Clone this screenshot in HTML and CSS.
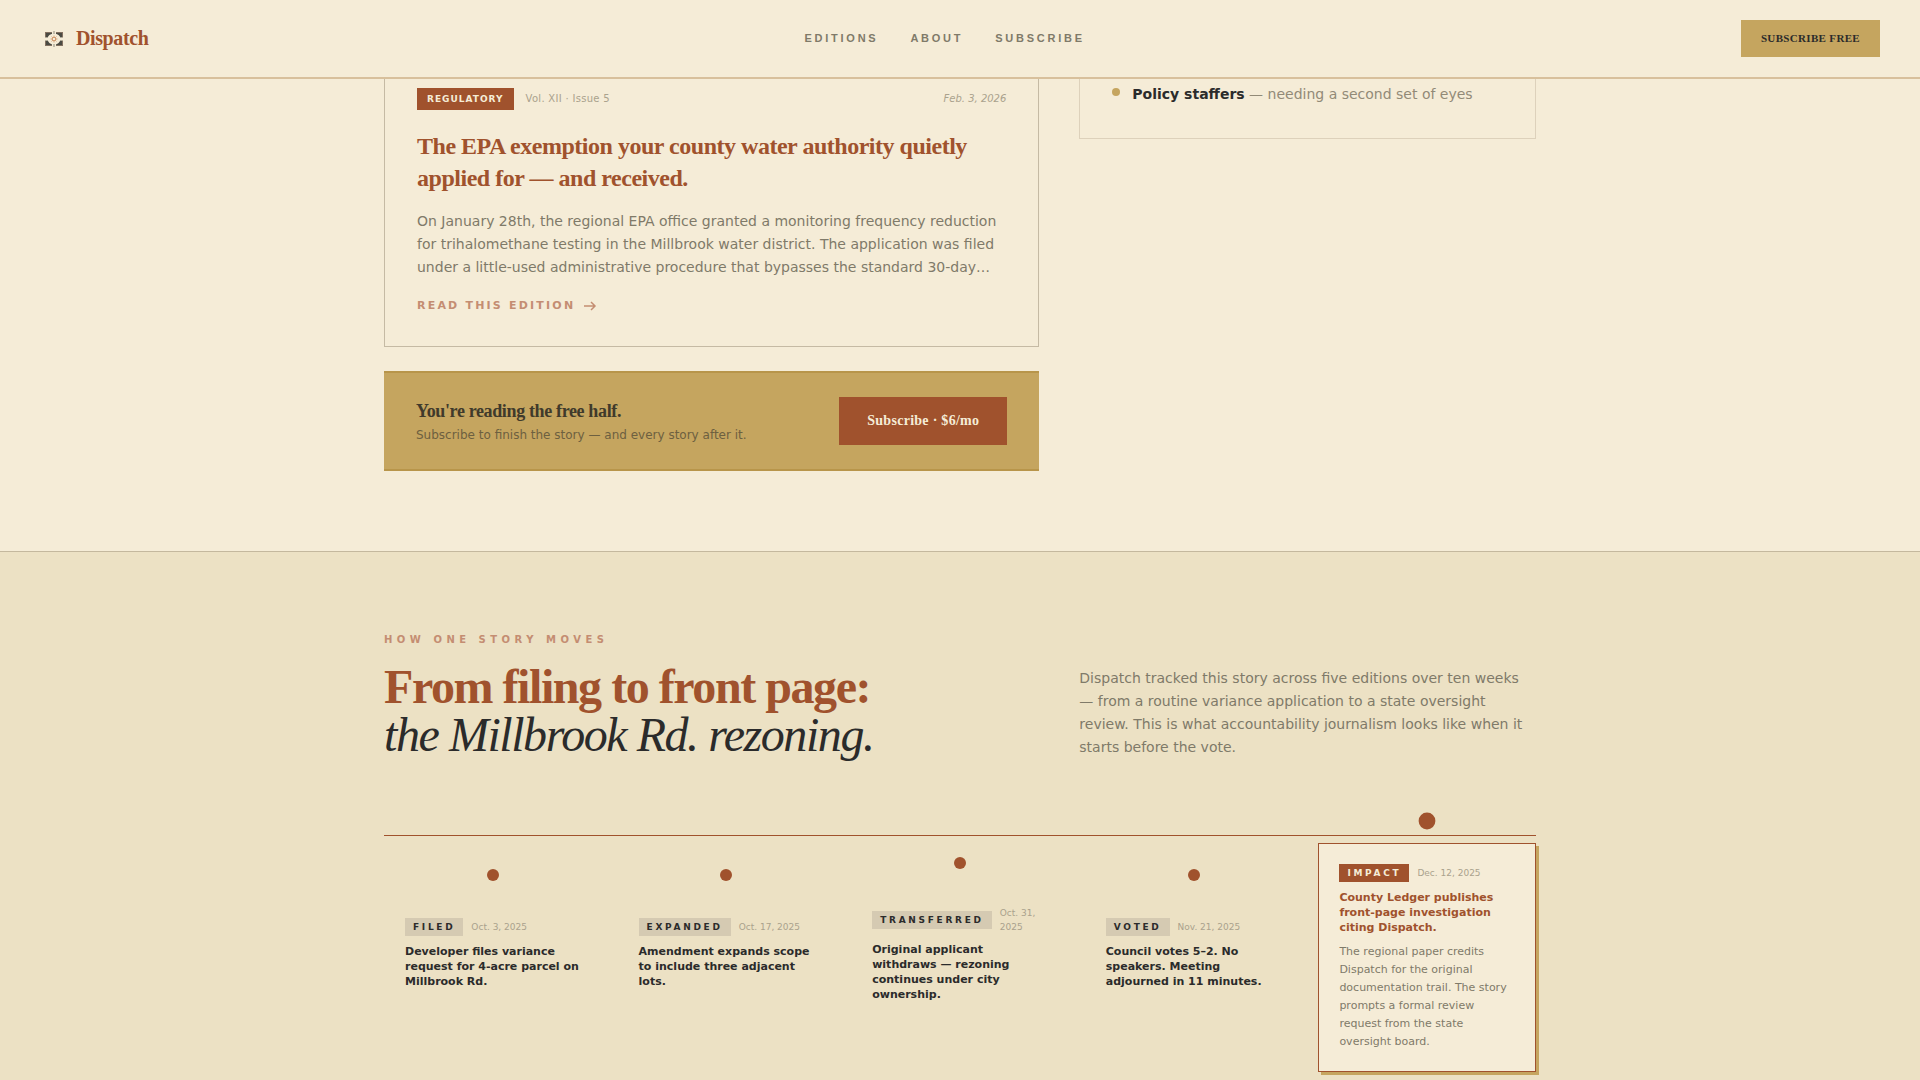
FILE: index.html
```html
<!DOCTYPE html>
<html lang="en">
<head>
<meta charset="utf-8">
<meta name="viewport" content="width=device-width, initial-scale=1">
<title>Dispatch</title>
<link rel="stylesheet" href="styles.css">
</head>
<body>
<header class="site-header">
  <a class="brand" href="#">
    <svg class="brand-mark" viewBox="0 0 28 28" aria-hidden="true">
      <rect x="5" y="7" width="18" height="14" fill="#4a4a42"/>
      <rect x="5.5" y="7.5" width="17" height="13" fill="none" stroke="#a98a74" stroke-opacity=".6"/>
      <ellipse cx="14" cy="14" rx="6.5" ry="5.5" fill="#f5ecd7"/>
      <path d="M12 6.5h4V9h-4zM12 19h4v2.500h-4zM4.500 12.500H8v3H4.500zM20 12.500h3.500v3H20z" fill="#f5ecd7"/>
      <path d="M14 6v3M14 19v3" stroke="#8d8a7b"/>
      <path d="M5 12.500h2M5 15.500h2M21 12.500h2M21 15.500h2" stroke="#b9b19c" stroke-width=".7"/>
      <path d="M14 10.500v7M10.500 14h7M11.500 11.500l5 5M16.500 11.500l-5 5" stroke="#d8a77c" stroke-width=".9"/>
      <circle cx="14" cy="14" r="1.800" fill="#f5ecd7" stroke="#c98a5c" stroke-width=".9"/>
    </svg>
    <span>Dispatch</span>
  </a>
  <nav class="site-nav" aria-label="Main">
    <a href="#editions">Editions</a>
    <a href="#about">About</a>
    <a href="#subscribe">Subscribe</a>
  </nav>
  <button class="header-cta" type="button">Subscribe Free</button>
</header>

<main>
  <section class="editions" id="editions">
    <div class="container columns">
      <div class="feed">
        <article class="edition">
          <div class="edition-meta">
            <span class="badge">Regulatory</span>
            <span class="issue">Vol. XII · Issue 5</span>
            <time class="edition-date" datetime="2026-02-03">Feb. 3, 2026</time>
          </div>
          <h3 class="edition-title">The EPA exemption your county water authority quietly applied for — and received.</h3>
          <p class="edition-text">On January 28th, the regional EPA office granted a monitoring frequency reduction for trihalomethane testing in the Millbrook water district. The application was filed under a little-used administrative procedure that bypasses the standard 30-day…</p>
          <a class="read-link" href="#edition-5">Read this edition
            <svg viewBox="0 0 14 14" aria-hidden="true"><path d="M1 7h11M8 3l4 4-4 4" fill="none" stroke="currentColor" stroke-width="1.5"/></svg>
          </a>
        </article>
        <div class="promo" id="subscribe">
          <div>
            <p class="promo-title">You're reading the free half.</p>
            <p class="promo-text">Subscribe to finish the story — and every story after it.</p>
          </div>
          <button class="promo-cta" type="button">Subscribe · $6/mo</button>
        </div>
      </div>
      <aside class="audience" id="about">
        <ul>
          <li><span><strong>Policy staffers</strong> — needing a second set of eyes</span></li>
        </ul>
      </aside>
    </div>
  </section>

  <section class="story">
    <div class="container">
      <div class="columns story-head">
        <div class="story-heading">
          <p class="eyebrow">How one story moves</p>
          <h2>From filing to front page: <em>the Millbrook Rd. rezoning.</em></h2>
        </div>
        <p class="story-intro">Dispatch tracked this story across five editions over ten weeks — from a routine variance application to a state oversight review. This is what accountability journalism looks like when it starts before the vote.</p>
      </div>
      <ol class="timeline">
        <li class="step">
          <span class="dot"></span>
          <div class="step-card">
            <div class="step-meta"><span class="tag">Filed</span><time datetime="2025-10-03">Oct. 3, 2025</time></div>
            <h3>Developer files variance request for 4-acre parcel on Millbrook Rd.</h3>
          </div>
        </li>
        <li class="step">
          <span class="dot"></span>
          <div class="step-card">
            <div class="step-meta"><span class="tag">Expanded</span><time datetime="2025-10-17">Oct. 17, 2025</time></div>
            <h3>Amendment expands scope to include three adjacent lots.</h3>
          </div>
        </li>
        <li class="step">
          <span class="dot"></span>
          <div class="step-card">
            <div class="step-meta"><span class="tag">Transferred</span><time datetime="2025-10-31">Oct. 31, 2025</time></div>
            <h3>Original applicant withdraws — rezoning continues under city ownership.</h3>
          </div>
        </li>
        <li class="step">
          <span class="dot"></span>
          <div class="step-card">
            <div class="step-meta"><span class="tag">Voted</span><time datetime="2025-11-21">Nov. 21, 2025</time></div>
            <h3>Council votes 5–2. No speakers. Meeting adjourned in 11 minutes.</h3>
          </div>
        </li>
        <li class="step step-active">
          <span class="dot"></span>
          <div class="step-card">
            <div class="step-meta"><span class="tag">Impact</span><time datetime="2025-12-12">Dec. 12, 2025</time></div>
            <h3>County Ledger publishes front-page investigation citing Dispatch.</h3>
            <p>The regional paper credits Dispatch for the original documentation trail. The story prompts a formal review request from the state oversight board.</p>
          </div>
        </li>
      </ol>
    </div>
  </section>
</main>
</body>
</html>
```
FILE: styles.css
```css
:root {
  --cream: #f5ecd7;
  --sand: #ece1c4;
  --sienna: #a0522d;
  --gold: #c5a55f;
  --ink: #2b2b2b;
  --muted: #7f7a69;
  --faint: #aaa28d;
  --serif: "Liberation Serif", "Times New Roman", serif;
  --sans: "DejaVu Sans", Verdana, sans-serif;
}

* { box-sizing: border-box; margin: 0; padding: 0; }

body {
  background: var(--cream);
  color: var(--ink);
  font-family: var(--sans);
  font-size: 14px;
  line-height: 23px;
}

a { color: inherit; text-decoration: none; }
ul, ol { list-style: none; }
button { border: 0; cursor: pointer; font-family: var(--serif); font-weight: 700; }

/* Header */
.site-header {
  position: sticky;
  top: 0;
  z-index: 10;
  display: flex;
  align-items: center;
  justify-content: space-between;
  padding: 20px 40px;
  background: var(--cream);
  border-bottom: 2px solid #d8c09c;
}
.brand {
  display: flex;
  align-items: center;
  gap: 8px;
  color: var(--sienna);
  font: 700 20px/29px var(--serif);
  letter-spacing: -0.02em;
}
.brand-mark { width: 28px; height: 28px; }
.site-nav {
  display: flex;
  gap: 32px;
  color: var(--muted);
  font: 700 11px/17px "Liberation Sans", Arial, sans-serif;
  letter-spacing: 0.25em;
  text-transform: uppercase;
}
.header-cta {
  padding: 10px 20px;
  background: var(--gold);
  color: var(--ink);
  font-size: 11px;
  line-height: 17px;
  letter-spacing: 0.03em;
  text-transform: uppercase;
}

/* Layout */
.container { max-width: 1152px; margin: 0 auto; }
.columns {
  display: grid;
  grid-template-columns: repeat(12, 1fr);
  column-gap: 40px;
}

/* Editions */
.editions { padding-bottom: 80px; }
.feed {
  grid-column: span 7;
  display: flex;
  flex-direction: column;
  gap: 24px;
}
.edition {
  padding: 9px 32px 32px;
  border: 1px solid #c5baa4;
  border-top: 0;
}
.edition-meta {
  display: flex;
  align-items: center;
  gap: 12px;
  margin-bottom: 20px;
  font-size: 10px;
  line-height: 14px;
  color: var(--faint);
}
.badge {
  padding: 4px 10px;
  background: var(--sienna);
  color: var(--cream);
  font-size: 9px;
  font-weight: 700;
  letter-spacing: 1px;
  text-transform: uppercase;
}
.issue { letter-spacing: 0.03em; }
.edition-date { margin-left: auto; font-style: italic; }
.edition-title {
  margin-bottom: 16px;
  color: var(--sienna);
  font: 700 24px/32px var(--serif);
  letter-spacing: -0.02em;
}
.edition-text { margin-bottom: 18px; color: var(--muted); }
.read-link {
  display: flex;
  align-items: center;
  gap: 8px;
  color: #c48d72;
  font-size: 11px;
  font-weight: 700;
  line-height: 17px;
  letter-spacing: 0.2em;
  text-transform: uppercase;
}
.read-link svg { width: 14px; height: 14px; }

.promo {
  display: flex;
  align-items: center;
  justify-content: space-between;
  padding: 24px 32px;
  background: var(--gold);
  border-top: 2px solid #b8954a;
  border-bottom: 2px solid #b8954a;
}
.promo-title {
  color: #403a2b;
  font: 700 18px/28px var(--serif);
  letter-spacing: -0.02em;
}
.promo-text { color: #6d6040; font-size: 12px; line-height: 20px; }
.promo-cta {
  padding: 14px 28px;
  background: var(--sienna);
  color: var(--cream);
  font-size: 14px;
  line-height: 20px;
  letter-spacing: 0.02em;
}

.audience {
  grid-column: span 5;
  align-self: start;
  padding: 4px 32px 32px;
  border: 1px solid #ddd1bb;
  border-top: 0;
  color: #928a77;
}
.audience li { display: flex; gap: 12px; }
.audience li::before {
  content: "";
  flex: none;
  width: 8px;
  height: 8px;
  margin-top: 5px;
  border-radius: 50%;
  background: var(--gold);
}
.audience strong { color: var(--ink); }

/* Story timeline */
.story {
  padding: 80px 0;
  background: var(--sand);
  border-top: 1px solid #c4b89e;
}
.story-head { align-items: end; margin-bottom: 56px; }
.story-heading { grid-column: span 7; }
.eyebrow {
  margin-bottom: 16px;
  color: #c48d72;
  font-size: 10px;
  font-weight: 700;
  line-height: 15px;
  letter-spacing: 0.45em;
  text-transform: uppercase;
}
.story-heading h2 {
  color: var(--sienna);
  font: 700 48px/48px var(--serif);
  letter-spacing: -0.03em;
}
.story-heading em {
  display: block;
  color: var(--ink);
  font-weight: 400;
}
.story-intro { grid-column: span 5; color: var(--muted); }

.timeline {
  position: relative;
  display: grid;
  grid-template-columns: repeat(5, 1fr);
  align-items: center;
  gap: 16px;
}
.timeline::before {
  content: "";
  position: absolute;
  top: 20px;
  left: 0;
  right: 0;
  height: 1px;
  background: var(--sienna);
}
.step {
  display: flex;
  flex-direction: column;
  align-items: center;
  gap: 16px;
  margin-bottom: 8px;
}
.dot {
  width: 12px;
  height: 12px;
  border-radius: 50%;
  background: var(--sienna);
}
.step-card {
  width: 100%;
  padding: 20px;
  border: 1px solid transparent;
  font-size: 11px;
  line-height: 18px;
}
.step-meta {
  display: flex;
  align-items: center;
  gap: 8px;
  margin-bottom: 8px;
  color: var(--faint);
  font-size: 9px;
  line-height: 14px;
}
.tag {
  padding: 2px 8px;
  background: #d5cab2;
  color: var(--ink);
  font-weight: 700;
  letter-spacing: 0.3em;
  text-transform: uppercase;
}
.step-card h3 { font-size: 11px; line-height: 15px; }
.step-card p { margin-top: 8px; color: var(--muted); }

.step-active { margin-bottom: 0; }
.step-active .dot { transform: scale(1.4); }
.step-active .step-card {
  background: var(--cream);
  border-color: var(--sienna);
  box-shadow: 3px 3px 0 var(--gold);
}
.step-active .tag { background: var(--sienna); color: var(--cream); }
.step-active h3 { color: var(--sienna); }
```
